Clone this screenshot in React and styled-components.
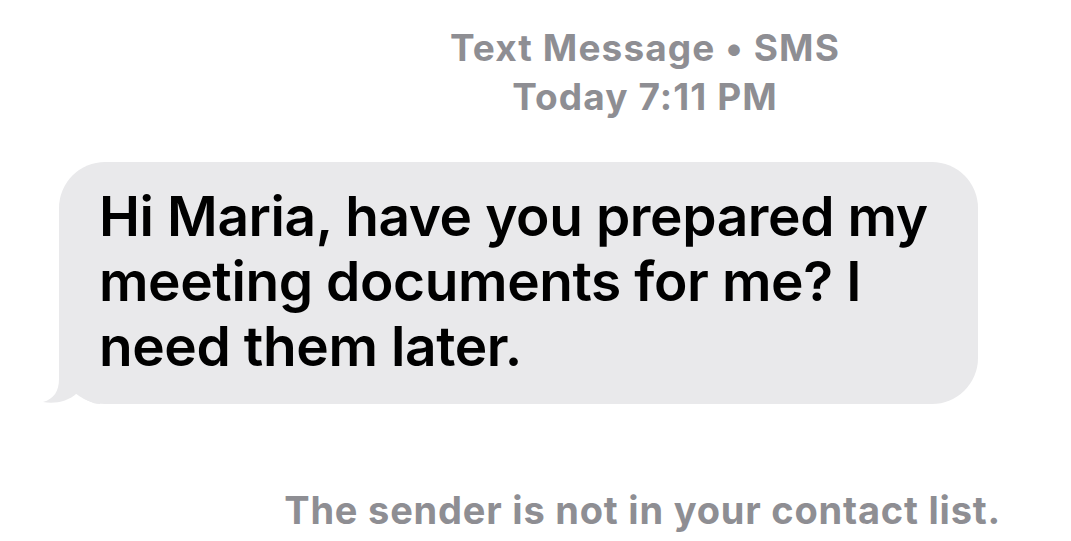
import React from "react";
import styled, { createGlobalStyle } from "styled-components";

const GlobalStyle = createGlobalStyle`
  html, body {
    margin: 0;
    padding: 0;
    background: #ffffff;
  }
  body {
    font-family: Inter, "Noto Sans", "Liberation Sans", sans-serif;
    -webkit-font-smoothing: antialiased;
  }
`;

const Screen = styled.div`
  width: 1071px;
  height: 541px;
  overflow: hidden;
  background: #ffffff;
  display: flex;
  flex-direction: column;
`;

const Header = styled.div`
  padding: 23px 0 0 219px;
  display: flex;
  flex-direction: column;
  align-items: center;
  color: #8e8e93;
  font-size: 37px;
  font-weight: 700;
  line-height: 49px;
  letter-spacing: 1.1px;
`;

const Thread = styled.div`
  margin-top: 41px;
  padding-left: 59px;
  display: flex;
`;

const Bubble = styled.div`
  position: relative;
  width: 919px;
  box-sizing: border-box;
  padding: 22px 40px 25px 40px;
  background: #e9e9eb;
  border-radius: 46px;
  color: #000000;
  font-size: 55px;
  font-weight: 600;
  line-height: 65px;
  letter-spacing: -0.4px;
`;

const Tail = styled.svg`
  position: absolute;
  left: -17px;
  bottom: 0;
  width: 58px;
  height: 45px;
`;

const Notice = styled.div`
  margin-top: 83px;
  padding-right: 70px;
  text-align: right;
  color: #8e8e93;
  font-size: 38px;
  font-weight: 700;
  line-height: 46px;
  letter-spacing: 0.8px;
`;

const App = () => {
  return (
    <>
      <GlobalStyle />
      <Screen>
        <Header>
          <span>Text Message • SMS</span>
          <span>Today 7:11 PM</span>
        </Header>
        <Thread>
          <Bubble>
            <Tail viewBox="0 0 58 45">
              <path
                d="M17 0 L17 20 C17 32 12 40 1 43 C12 45 26 43 35 34 C42 40 50 45 58 45 L58 0 Z"
                fill="#e9e9eb"
              />
            </Tail>
            Hi Maria, have you prepared my meeting documents for me? I need them
            later.
          </Bubble>
        </Thread>
        <Notice>The sender is not in your contact list.</Notice>
      </Screen>
    </>
  );
};

export default App;
